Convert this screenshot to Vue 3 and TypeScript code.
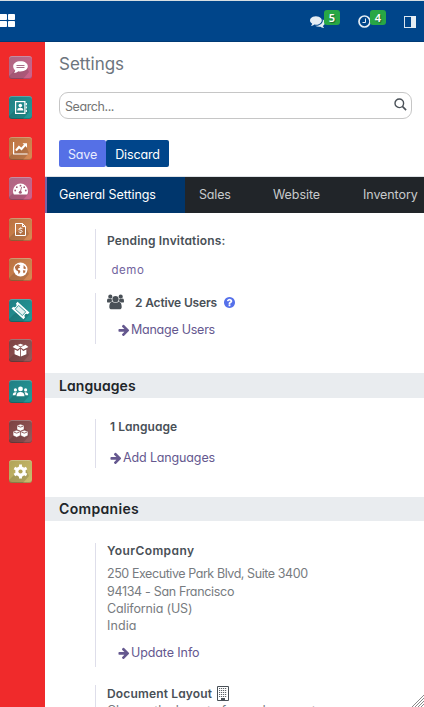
<script setup lang="ts">
const apps: { name: string; tone: string }[] = [
  { name: 'discuss', tone: 'pink' },
  { name: 'contacts', tone: 'teal' },
  { name: 'sales', tone: 'orange' },
  { name: 'dashboards', tone: 'pink' },
  { name: 'invoicing', tone: 'orange' },
  { name: 'website', tone: 'orange' },
  { name: 'events', tone: 'teal' },
  { name: 'inventory', tone: 'wine' },
  { name: 'members', tone: 'teal' },
  { name: 'modules', tone: 'wine' },
  { name: 'settings', tone: 'olive' },
]
const arrow =
  'M1600 960q0 54-37 91l-651 651q-39 37-91 37-51 0-90-37l-75-75q-38-38-38-91t38-91l293-293h-704q-52 0-84.5-37.5t-32.5-90.5v-128q0-53 32.5-90.5t84.5-37.5h704l-293-294q-38-36-38-90t38-90l75-75q38-38 90-38 53 0 91 38l651 651q37 35 37 90z'
const comments =
  'M1408 768q0 139-94 257t-256.5 186.5-353.5 68.5q-86 0-176-16-124 88-278 128-36 9-86 16h-3q-11 0-20.5-8t-11.5-21q-1-3-1-6.5t.5-6.5 2-6l2.5-5 3.5-5.5 4-5 4.5-5 4-4.5q5-6 23-25t26-29.5 22.5-29 25-38.5 20.5-44q-124-72-195-177t-71-224q0-139 94-257t256.5-186.5 353.5-68.5 353.5 68.5 256.5 186.5 94 257zm384 256q0 120-71 224.5t-195 176.5q10 24 20.5 44t25 38.5 22.5 29 26 29.5 23 25q1 1 4 4.5t4.5 5 4 5 3.5 5.5l2.5 5 2 6 .5 6.5-1 6.5q-3 14-13 22t-22 7q-50-7-86-16-154-40-278-128-90 16-176 16-271 0-472-132 58 4 88 4 161 0 309-45t264-129q125-92 192-212t67-254q0-77-23-152 129 71 204 178t75 230z'
const question =
  'M1024 1376v-192q0-14-9-23t-23-9h-192q-14 0-23 9t-9 23v192q0 14 9 23t23 9h192q14 0 23-9t9-23zm256-672q0-88-55.5-163t-138.5-116-170-41q-243 0-371 213-15 24 8 42l132 100q7 6 19 6 16 0 25-12 53-68 86-92 34-24 86-24 48 0 85.5 26t37.5 59q0 38-20 61t-68 45q-63 28-115.5 86.5t-52.5 125.5v36q0 14 9 23t23 9h192q14 0 23-9t9-23q0-19 21.5-49.5t54.5-49.5q32-18 49-28.5t46-35 44.5-48 28-60.5 12.5-81zm384 192q0 209-103 385.5t-279.5 279.5-385.5 103-385.5-103-279.5-279.5-103-385.5 103-385.5 279.5-279.5 385.5-103 385.5 103 279.5 279.5 103 385.5z'
</script>

<template>
  <div class="screen">
    <header class="topbar">
      <svg class="grid-icon" width="15" height="13" viewBox="0 0 15 13" fill="#fff">
        <rect x="-1" width="8" height="6" rx=".8" /><rect x="8" width="7" height="6" rx=".8" />
        <rect x="-1" y="7" width="8" height="6" rx=".8" /><rect x="8" y="7" width="7" height="6" rx=".8" />
      </svg>
      <div class="tray">
        <svg width="15" height="15" viewBox="0 0 1792 1792" fill="#e5edf4"><path :d="comments" /></svg>
        <span class="badge">5</span>
        <svg class="clock" width="13" height="13" viewBox="0 0 13 13" fill="none" stroke="#e5edf4">
          <circle cx="6.500" cy="6.500" r="5.500" stroke-width="1.700" /><path d="M7.500 3.500v4H4.500" stroke-width="1" />
        </svg>
        <span class="badge">4</span>
        <svg class="panel" width="12" height="12" viewBox="0 0 12 12">
          <rect x=".5" y=".5" width="11" height="11" fill="none" stroke="#dce6ef" /><path d="M7 0h5v12H7z" fill="#e5edf4" />
        </svg>
      </div>
    </header>

    <div class="body">
      <nav class="sidebar">
        <span v-for="a in apps" :key="a.name" class="app" :class="a.tone">
          <svg width="23" height="23" viewBox="0 0 23 23">
            <path d="M5 15 0 20v3h14l6-7-3-7z" fill="#000" opacity=".13" />
            <g v-if="a.name === 'discuss'">
              <path d="M11.500 5.300c4.300 0 7.300 2.100 7.300 5s-3 5.100-7.300 5.100c-.8 0-1.500-.1-2.200-.2-1.200 1-2.500 1.500-4.500 1.600.8-.8 1.300-1.500 1.400-2.600-1.300-.9-2-2.300-2-3.900 0-2.900 3-5 7.300-5z" fill="#fff" />
              <path d="M7.500 9.500h8M7.500 11.500h8" stroke="#a9718b" />
            </g>
            <g v-else-if="a.name === 'contacts'" fill="none" stroke="#fff">
              <rect x="6.600" y="5.600" width="9.300" height="11.800" stroke-width="1.200" />
              <path d="M17.300 7v2.200M17.300 10.400v2.200M17.300 13.800V16" stroke-width="1.200" />
              <circle cx="11.300" cy="9.600" r="1.800" fill="#fff" stroke="none" />
              <path d="M8.200 14.600c0-2.300 1.300-2.900 3.100-2.900s3.100.6 3.100 2.900z" fill="#fff" stroke="none" />
            </g>
            <g v-else-if="a.name === 'sales'" fill="none" stroke="#fff">
              <path d="M4.600 5v12h14" stroke-width="1.200" /><path d="m7 13.500 3-3.500 2.500 2L16 8" stroke-width="2" />
              <path d="M13.500 6.200H18v4.500z" fill="#fff" stroke="none" />
            </g>
            <g v-else-if="a.name === 'dashboards'">
              <path d="M4 14a7.500 7.500 0 1 1 15 0c0 1.500-.3 2.700-.8 3.500H4.800C4.300 16.700 4 15.500 4 14z" fill="#fff" />
              <g fill="#a25c78"><circle cx="6.200" cy="13.500" r=".9" /><circle cx="7.800" cy="10.200" r=".9" /><circle cx="11.500" cy="8.700" r=".9" /><circle cx="15.200" cy="10.200" r=".9" /><circle cx="16.800" cy="13.500" r=".9" /><circle cx="11.300" cy="15.200" r="1.500" /></g>
              <path d="m11.300 15 1.300-5" stroke="#a25c78" stroke-width=".9" />
            </g>
            <g v-else-if="a.name === 'invoicing'" fill="none" stroke="#fff">
              <path d="M6.500 5.500h7l3 3v9h-10zM13.500 5.500v3h3" stroke-width="1" />
              <path d="M13.400 10.700c-.7-.5-3.500-.8-3.500.6 0 1.300 3.400.6 3.400 2 0 1.400-2.800 1.200-3.700.5M11.600 9.500v1M11.600 14.300v1.200" stroke-width=".9" />
            </g>
            <g v-else-if="a.name === 'website'">
              <circle cx="11.500" cy="11.500" r="7" fill="#fff" />
              <path d="m6.500 8 2.500-1.800 2.500 1.200-1.400 1.200 1 1.200-1.800.5-.5 1.300 2.300 1 .2 1.500-1.700 2.200-.7-3-2-1.300-1-2.600zM14.700 7l2.200 2.700-.5 1.500-2-.7zM13.900 12.300l2.600.2-.5 2-1.600.8z" fill="#b56f45" />
            </g>
            <g v-else-if="a.name === 'events'" transform="rotate(42 11.500 11.500)">
              <path d="M3.500 7h16v2.500a2 2 0 0 0 0 4V16h-16v-2.500a2 2 0 0 0 0-4z" fill="#fff" />
              <rect x="6.700" y="9" width="9.600" height="5" fill="#e3f1f1" stroke="#218c8b" stroke-width=".8" />
            </g>
            <g v-else-if="a.name === 'inventory'" fill="#fff">
              <path d="m11.500 8.300-5-2.600L3.600 8l4.900 2.500zM11.500 8.300l5-2.600L19.400 8l-4.900 2.500z" />
              <path d="m5.600 10.600 3.200 1.500 2.300-2.300v7.700l-5.500-2.300zM17.400 10.600l-3.200 1.500-2.300-2.300v7.700l5.500-2.300zM8.500 6l3-1.200 3 1.200-3 1.500z" />
            </g>
            <g v-else-if="a.name === 'members'" fill="#fff">
              <circle cx="11.500" cy="8.900" r="2.400" /><circle cx="6.400" cy="9.900" r="1.600" /><circle cx="16.600" cy="9.900" r="1.600" />
              <path d="M7.500 16.200c0-3 1.500-4.300 4-4.300s4 1.300 4 4.300zM3.800 15.300c0-2.200.8-3.100 2.800-3.100.4 0 .8.100 1 .2-.7.800-1 1.700-1.100 2.900zM19.200 15.300c0-2.200-.8-3.100-2.800-3.100-.4 0-.8.100-1 .2.700.8 1 1.700 1.100 2.900z" />
            </g>
            <g v-else-if="a.name === 'modules'" fill="#fff" stroke="#7b4041" stroke-width=".4">
              <path d="m11.500 4.300 3.500 1.300v3.900l-3.500 1.600L8 9.500V5.600zM7.700 10.300l3.600 1.300v4l-3.600 1.600-3.600-1.600v-4zM15.300 10.300l3.600 1.300v4l-3.600 1.600-3.600-1.600v-4z" />
              <path d="m8.700 6.100 2.800 1 2.800-1M4.900 12.100l2.800 1 2.800-1M12.500 12.100l2.800 1 2.800-1" fill="none" stroke-width=".8" />
            </g>
            <g v-else>
              <circle cx="11.500" cy="11.500" r="3.600" fill="none" stroke="#fff" stroke-width="3.200" />
              <path d="M11.500 4.500v14M5.400 8l12.200 7M5.400 15l12.200-7" stroke="#fff" stroke-width="2.900" />
              <circle cx="11.500" cy="11.500" r="2.100" fill="#b1a458" />
            </g>
          </svg>
        </span>
      </nav>

      <main class="main">
        <h1 class="title">Settings</h1>
        <div class="search">
          <span>Search...</span>
          <svg width="13" height="13" viewBox="0 0 13 13" fill="none" stroke="#495057" stroke-width="1.400">
            <circle cx="5.300" cy="5.300" r="4.300" /><path d="m8.400 8.400 3.700 3.700" stroke-width="1.600" />
          </svg>
        </div>
        <div class="actions">
          <button class="btn save">Save</button><button class="btn discard">Discard</button>
        </div>
        <div class="tabs">
          <div class="tab active">General Settings</div>
          <div class="tab sales">Sales</div>
          <div class="tab website">Website</div>
          <div class="tab stock">Inventory</div>
        </div>

        <section class="group users">
          <div class="setting pending">
            <div class="label l-pending">Pending Invitations:</div>
            <a class="demo">demo</a>
          </div>
          <div class="setting active-users">
            <div class="label l-users">
              <svg class="people" width="17" height="16" viewBox="0 0 17 16" fill="#495057">
                <circle cx="8.500" cy="5.200" r="3.100" /><circle cx="3.300" cy="2.700" r="2.100" /><circle cx="13.700" cy="2.700" r="2.100" />
                <path d="M2.300 13c0-3.200.9-5 3-5.300 1 .8 2 1.100 3.200 1.100s2.200-.3 3.200-1.100c2.100.3 3 2.100 3 5.300 0 1.500-.9 2.300-2.200 2.300h-8c-1.300 0-2.200-.8-2.200-2.300zM0 7.400C0 5.700.4 4.600 1.300 4.500c.9.600 2.100.8 3.400.4-.1 1 .1 1.800.7 2.500-1.100 0-1.900.4-2.500 1.200H1.500C.5 8.600 0 8.200 0 7.400zM17 7.400c0-1.700-.4-2.800-1.300-2.900-.9.600-2.100.8-3.400.4.1 1-.1 1.800-.7 2.500 1.100 0 1.900.4 2.500 1.200h1.400c1 0 1.500-.4 1.500-1.200z" />
              </svg>
              <span>2 Active Users</span>
              <svg class="help" width="11" height="11" viewBox="128 128 1536 1536" fill="#5570ea"><path :d="question" /></svg>
            </div>
            <a class="link l-manage"><svg width="12" height="12" viewBox="64 64 1664 1664"><path :d="arrow" /></svg><span>Manage Users</span></a>
          </div>
        </section>

        <h2 class="heading h-lang">Languages</h2>
        <section class="group langs">
          <div class="setting lang">
            <div class="label l-lang">1 Language</div>
            <a class="link l-add"><svg width="12" height="12" viewBox="64 64 1664 1664"><path :d="arrow" /></svg><span>Add Languages</span></a>
          </div>
        </section>

        <h2 class="heading h-comp">Companies</h2>
        <section class="group comps">
          <div class="setting company">
            <div class="label l-comp">YourCompany</div>
            <address class="address">
              <div class="street">250 Executive Park Blvd, Suite 3400</div>
              <div class="city">94134 - San Francisco</div>
              <div class="state">California (US)</div>
              <div class="country">India</div>
            </address>
            <a class="link l-update"><svg width="12" height="12" viewBox="64 64 1664 1664"><path :d="arrow" /></svg><span>Update Info</span></a>
          </div>
          <div class="setting layout">
            <div class="label l-doc">
              <span>Document Layout</span>
              <svg width="12" height="15" viewBox="0 0 12 15" fill="none" stroke="#495057">
                <path d="M.5.500h11v14H.5z" />
                <path d="M2 2.500h8M2 4.500h8M2 6.500h8M2 8.500h8M2 10.500h8" stroke-width=".9" stroke-dasharray="1.200 .8" />
                <path d="M4 12h4v3H4z" fill="#495057" stroke="none" />
              </svg>
            </div>
            <div class="hint">Choose the layout of your documents</div>
          </div>
        </section>
      </main>
    </div>
    <svg class="grip" width="12" height="12" viewBox="0 0 12 12" fill="none" stroke="#8a8a8a"><path d="M0 12 12 0M3 12l9-9M6 12l6-6M9 12l3-3" /></svg>
  </div>
</template>

<style>
body { margin: 0; background: #fff; overflow: hidden; }
</style>
<style scoped>
* { box-sizing: border-box; }
.screen { position: relative; width: 424px; height: 707px; overflow: hidden; font-family: Inter, "Noto Sans", sans-serif; font-feature-settings: "cv11"; font-size: 12.5px; color: #495057; display: flex; flex-direction: column; }
svg { display: block; flex: none; }
.topbar { height: 42px; flex: none; background: #00458a; border-top: 1px solid #d6dee2; border-bottom: 1px solid #003a75; display: flex; justify-content: space-between; padding-top: 13px; }
.tray { display: flex; align-items: flex-start; padding-right: 8px; }
.badge { width: 16px; height: 15px; margin: -4px 0 0 -1px; border-radius: 3px; background: #28a745; color: #fff; font: 600 11px/15px "Noto Sans", sans-serif; text-align: center; text-shadow: 1px 1px 1px #0006; }
.clock { margin: 1px 0 0 18px; }
.panel { margin: 2px 0 0 18px; }
.body { flex: 1; min-height: 0; display: flex; }
.sidebar { width: 45px; flex: none; background: #f02a2b; display: flex; flex-direction: column; gap: 17.450px; padding: 14px 0 0 9px; }
.app { width: 23px; height: 23px; flex: none; border-radius: 3px; overflow: hidden; box-shadow: inset 0 1px #ffffff40, inset 0 -1px #00000030; }
.pink { background: linear-gradient(135deg, #aa6882, #cf638c); }
.teal { background: linear-gradient(135deg, #207e83, #249b99); }
.orange { background: linear-gradient(135deg, #b8713f, #d88b57); }
.wine { background: linear-gradient(135deg, #7b4041, #985c5d); }
.olive { background: linear-gradient(135deg, #b1a458, #cabd70); }
.main { flex: 1; min-width: 0; overflow: hidden; }
.title { margin: 10px 0 0 14px; font-size: 17px; font-weight: 400; line-height: 24px; height: 23px; color: #6c757d; letter-spacing: 0; }
.search { margin: 17px 12px 0 14px; height: 27px; border: 1px solid #c6c6c6; border-radius: 9px; display: flex; justify-content: space-between; padding: 0 4px 0 5px; line-height: 27px; color: #757575; font-size: 12.5px; letter-spacing: -.42px; }
.search svg { margin-top: 5px; }
.actions { display: flex; margin: 21px 0 0 14px; }
.btn { height: 27px; border: 0; border-radius: 2px; padding: 1px 0 0; color: #fff; font: inherit; font-feature-settings: inherit; }
.save { width: 47px; background: #5570e6; color: #e9edff; letter-spacing: -.15px; }
.discard { width: 63px; background: #00458a; letter-spacing: -.15px; }
.tabs { margin-top: 9px; height: 37px; border-top: 1px solid #dee2e6; background: #212529; display: flex; color: #c8cacc; line-height: 36px; white-space: nowrap; }
.tab { flex: none; }
.active { width: 140px; border-left: 2px solid #7c62a4; background: #00366c; color: #fff; padding-left: 12px; letter-spacing: -.06px; }
.sales { width: 74px; padding-left: 14px; letter-spacing: -.19px; }
.website { width: 90px; padding-left: 14px; letter-spacing: -.07px; }
.stock { padding-left: 14px; letter-spacing: -.08px; }
.group { display: flex; flex-direction: column; padding-left: 50px; }
.setting { border-left: 1px solid #dedeea; padding-left: 11px; flex: none; }
.label { font-size: 12px; font-weight: 600; line-height: 18px; color: #495057; display: flex; white-space: nowrap; }
.users { padding-top: 16px; gap: 14px; height: 160px; }
.pending { height: 50px; padding-top: 3px; }
.l-pending { letter-spacing: .16px; }
.demo { display: block; margin: 11px 0 0 4.5px; font-size: 11.5px; line-height: 18px; letter-spacing: .55px; color: #71639e; }
.active-users { height: 51px; padding-top: 1px; }
.l-users { letter-spacing: -.16px; }
.people { margin: 0 11px 0 0; }
.help { margin: 3px 0 0 7px; }
.link { display: flex; align-items: center; gap: 1px; color: #65588f; line-height: 18px; margin-left: 11px; white-space: nowrap; }
.link svg { fill: #65588f; }
.l-manage { margin-top: 9px; letter-spacing: -.25px; }
.heading { margin: 0; height: 25px; line-height: 25px; background: #e9ecef; color: #212529; font-size: 14px; font-weight: 600; padding-left: 14px; }
.h-lang { letter-spacing: .08px; }
.langs { padding-top: 21px; height: 99px; }
.lang { height: 49px; }
.l-lang { margin: -1px 0 0 3px; letter-spacing: .05px; }
.l-add { margin: 13px 0 0 3px; letter-spacing: -.14px; }
.h-comp { height: 24px; line-height: 24px; letter-spacing: .32px; }
.comps { padding-top: 22px; gap: 18px; }
.company { height: 124px; }
.l-comp { margin-top: -1px; letter-spacing: .41px; }
.address { font-style: normal; line-height: 17.33px; color: #777b80; margin-top: 5.4px; white-space: nowrap; }
.street { letter-spacing: -.43px; }
.city { letter-spacing: -.32px; }
.state { letter-spacing: -.14px; }
.country { letter-spacing: .11px; }
.l-update { margin-top: 9.6px; letter-spacing: -.1px; }
.layout { height: 80px; }
.l-doc { letter-spacing: .16px; gap: 5px; }
.l-doc svg { margin-top: 1px; }
.hint { color: #777b80; letter-spacing: -.22px; line-height: 16px; white-space: nowrap; }
.grip { position: absolute; right: 0; bottom: 0; }
</style>
